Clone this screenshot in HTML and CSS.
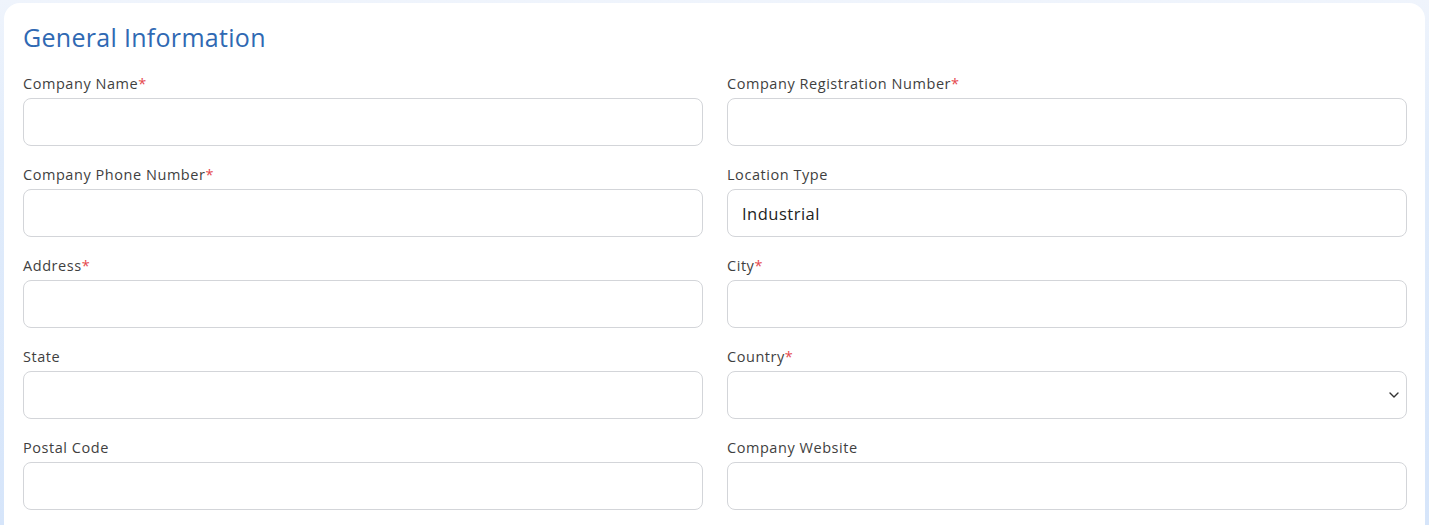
FILE: index.html
```html
<!DOCTYPE html>
<html>
<head>
<meta charset="utf-8">
<link rel="stylesheet" href="styles.css">
</head>
<body>
<div class="card">
  <h2 class="title">General Information</h2>
  <div class="grid">
    <div class="field"><label class="label">Company Name<span class="req">*</span></label><div class="input"></div></div>
    <div class="field"><label class="label">Company Registration Number<span class="req">*</span></label><div class="input"></div></div>
    <div class="field"><label class="label">Company Phone Number<span class="req">*</span></label><div class="input"></div></div>
    <div class="field"><label class="label">Location Type</label><div class="input">Industrial</div></div>
    <div class="field"><label class="label">Address<span class="req">*</span></label><div class="input"></div></div>
    <div class="field"><label class="label">City<span class="req">*</span></label><div class="input"></div></div>
    <div class="field"><label class="label">State</label><div class="input"></div></div>
    <div class="field"><label class="label">Country<span class="req">*</span></label><div class="input select"><svg class="chev" width="10" height="6" viewBox="0 0 10 6"><path d="M1 1 L5 5 L9 1" fill="none" stroke="#333" stroke-width="1.4" stroke-linecap="round" stroke-linejoin="round"/></svg></div></div>
    <div class="field"><label class="label">Postal Code</label><div class="input"></div></div>
    <div class="field"><label class="label">Company Website</label><div class="input"></div></div>
  </div>
</div>
</body>
</html>
```
FILE: styles.css
```css
html, body { height: 100%; }
body {
  margin: 0;
  padding: 3px 4px 0 4px;
  box-sizing: border-box;
  background: linear-gradient(to bottom, #eff4fc 0%, #e1ecfb 30%, #d6e5fa 100%);
  font-family: "Open Sans", "Noto Sans", sans-serif;
  overflow: hidden;
}
.card {
  background: #fff;
  border-radius: 16px;
  padding: 16px 18px 40px 19px;
  min-height: 600px;
}
.title {
  margin: 0 0 19px 0;
  font-size: 25px;
  line-height: 36px;
  font-weight: 500;
  letter-spacing: 0.3px;
  color: #2f69b3;
}
.grid {
  display: grid;
  grid-template-columns: 1fr 1fr;
  column-gap: 24px;
  row-gap: 19px;
}
.field { display: flex; flex-direction: column; }
.label {
  font-size: 14.5px;
  line-height: 20px;
  letter-spacing: 0.55px;
  color: #3f3f3f;
  margin-bottom: 4px;
}
.req { color: #e5484d; }
.input {
  box-sizing: border-box;
  height: 48px;
  border: 1px solid #d3d5d9;
  border-radius: 8px;
  padding: 0 14px;
  display: flex;
  align-items: center;
  font-size: 16.5px;
  letter-spacing: 0.5px;
  color: #222;
}
.select { justify-content: flex-end; padding-right: 7px; }
.chev { display: block; }
```
